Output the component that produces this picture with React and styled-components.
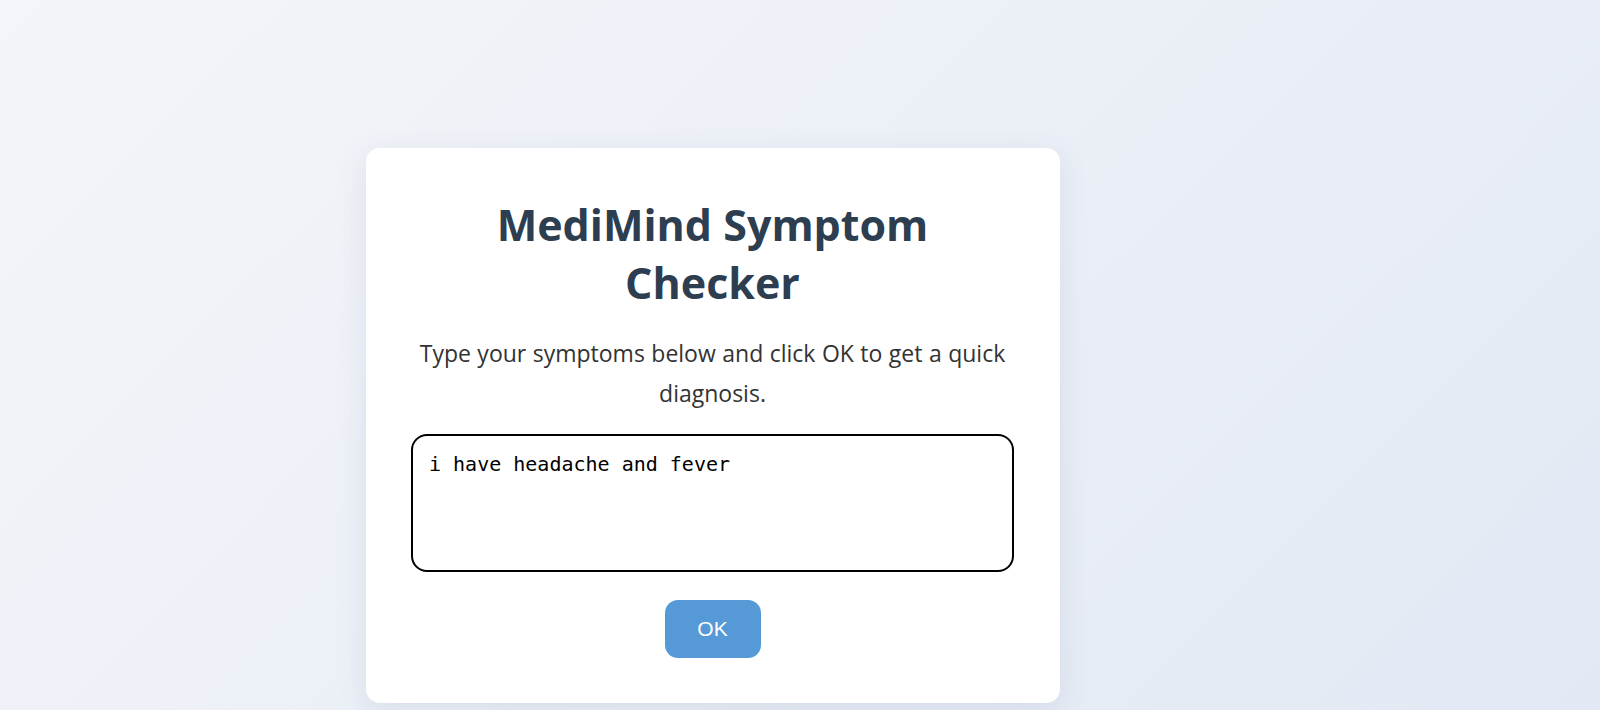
import React, { useState, useEffect, useRef } from "react";
import styled, { createGlobalStyle } from "styled-components";

const GlobalStyle = createGlobalStyle`
  html, body {
    margin: 0;
    padding: 0;
  }
  body {
    font-family: "Open Sans", "Noto Sans", sans-serif;
    background: linear-gradient(135deg, #f4f5f9 0%, #e2e9f4 100%);
    min-height: 100vh;
    overflow: hidden;
  }
`;

const Page = styled.div`
  display: flex;
  align-items: flex-start;
  min-height: 100vh;
  box-sizing: border-box;
  padding: 148px 0 0 366px;
`;

const Card = styled.div`
  display: flex;
  flex-direction: column;
  align-items: center;
  width: 694px;
  box-sizing: border-box;
  padding: 48px 46px 45px 45px;
  background: #ffffff;
  border-radius: 14px;
  box-shadow: 0 8px 30px rgba(80, 100, 140, 0.12);
`;

const Title = styled.h1`
  margin: 0;
  width: 480px;
  font-family: "Open Sans", sans-serif;
  font-size: 43px;
  font-weight: 700;
  line-height: 58px;
  color: #2c3e50;
  text-align: center;
`;

const Subtitle = styled.p`
  margin: 21px 0 21px;
  font-size: 23px;
  line-height: 40px;
  color: #333;
  text-align: center;
  word-spacing: 0.5px;
`;

const SymptomInput = styled.textarea`
  width: 603px;
  height: 138px;
  box-sizing: border-box;
  padding: 16px 16px;
  border: 2px solid #000;
  border-radius: 16px;
  font-family: "DejaVu Sans Mono", "Liberation Mono", monospace;
  font-size: 20px;
  color: #000;
  caret-color: #000;
  resize: none;
  outline: none;
  background: #fff;
`;

const OkButton = styled.button`
  margin-top: 28px;
  width: 96px;
  height: 58px;
  border: none;
  border-radius: 13px;
  background: #5599d6;
  color: #fff;
  font-family: "Liberation Sans", Arial, sans-serif;
  font-size: 21px;
  cursor: pointer;
`;

export default function App() {
  const [symptoms, setSymptoms] = useState("i have headache and fever");
  const inputRef = useRef(null);

  useEffect(() => {
    const el = inputRef.current;
    if (el) {
      el.focus();
      el.setSelectionRange(el.value.length, el.value.length);
    }
  }, []);

  return (
    <>
      <GlobalStyle />
      <Page>
        <Card>
          <Title>MediMind Symptom Checker</Title>
          <Subtitle>
            Type your symptoms below and click OK to get a quick
            <br />
            diagnosis.
          </Subtitle>
          <SymptomInput
            ref={inputRef}
            value={symptoms}
            onChange={e => setSymptoms(e.target.value)}
          />
          <OkButton>OK</OkButton>
        </Card>
      </Page>
    </>
  );
}
